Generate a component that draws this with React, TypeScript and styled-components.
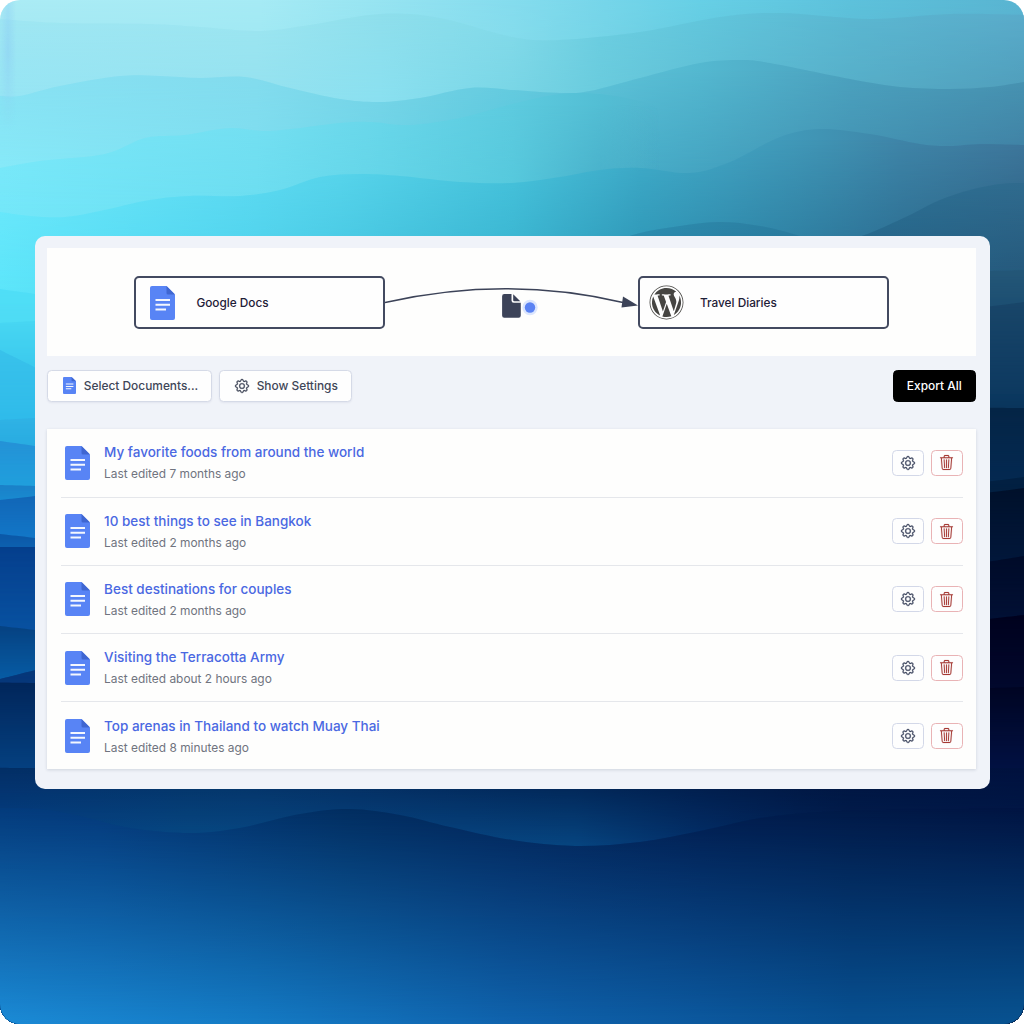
import React from "react";
import styled, { createGlobalStyle } from "styled-components";
import { BsGear, BsTrash3 } from "react-icons/bs";
import { FaWordpress } from "react-icons/fa";

const GlobalStyle = createGlobalStyle`
  *, *::before, *::after { box-sizing: border-box; }
  body { margin: 0; background: #fff; font-family: Inter, "Liberation Sans", sans-serif; }
`;

type Stop = [number, string];
type Point = [number, number];
interface WaveSpec {
  edge: Point[];
  top: Stop[];
  bottom: Stop[];
  y0: number;
  y1: number;
}

/* Smooth curve through the crest points, closed along the bottom of the canvas. */
const wavePath = (pts: Point[]) => {
  let d = `M${pts[0][0]} ${pts[0][1]}`;
  for (let i = 0; i < pts.length - 1; i++) {
    const a = pts[Math.max(i - 1, 0)];
    const b = pts[i];
    const c = pts[i + 1];
    const e = pts[Math.min(i + 2, pts.length - 1)];
    d += ` C${b[0] + (c[0] - a[0]) / 6} ${b[1] + (c[1] - a[1]) / 6} ${c[0] - (e[0] - b[0]) / 6} ${c[1] - (e[1] - b[1]) / 6} ${c[0]} ${c[1]}`;
  }
  return `${d} V1024 H${pts[0][0]} Z`;
};

const side = (x0: number, ya: number, x1: number, yb: number, top: string, bottom: string, y1: number): WaveSpec => ({
  edge: [[x0, ya], [x1, yb]],
  top: [[0, top]],
  bottom: [[0, bottom]],
  y0: Math.min(ya, yb),
  y1,
});

const left = (ya: number, yb: number, top: string, bottom: string, y1: number) => side(0, ya, 60, yb + (yb - ya) * 0.7, top, bottom, y1);
const right = (ya: number, yb: number, top: string, bottom: string, y1: number) => side(960, ya + (ya - yb) * 0.7, 1024, yb, top, bottom, y1);

const waves: WaveSpec[] = [
  {
    edge: [[0, 0], [1024, 0]], y0: 0, y1: 40,
    top: [[0, "#abecf5"], [260, "#a6ebf5"], [512, "#85dcee"], [700, "#67d0e6"], [850, "#5dc2dc"], [1024, "#59b5d2"]],
    bottom: [[0, "#a3e8f3"], [260, "#a0e8f3"], [512, "#84dcec"], [700, "#64cae0"], [850, "#5cbdd6"], [1024, "#5ab0cd"]],
  },
  {
    edge: [[0, 19], [60, 23], [150, 24], [200, 27], [260, 31], [310, 25], [380, 14], [440, 18], [512, 37], [560, 40], [640, 32], [720, 17], [780, 13], [870, 19], [950, 14], [1024, 15]],
    y0: 12, y1: 100,
    top: [[0, "#a0e7f3"], [256, "#9de6f1"], [380, "#8fdfec"], [512, "#84dbea"], [600, "#6ccee1"], [700, "#62c7dd"], [850, "#5bb8d2"], [1024, "#5aaccb"]],
    bottom: [[0, "#96e5f4"], [256, "#94e1ef"], [380, "#8ae0f0"], [512, "#78d5e5"], [600, "#69cbdd"], [750, "#5ab7cf"], [1024, "#4e9cb9"]],
  },
  {
    edge: [[0, 96], [20, 96], [60, 86], [120, 76], [160, 76], [200, 78], [245, 77], [290, 88], [340, 99], [380, 102], [420, 98], [470, 88], [512, 90], [560, 93], [590, 91], [640, 78], [700, 63], [740, 60], [770, 63], [850, 79], [900, 87], [950, 89], [990, 87], [1024, 82]],
    y0: 70, y1: 170,
    top: [[0, "#89e1f3"], [256, "#83dcee"], [380, "#77d4e7"], [512, "#67cce0"], [700, "#54b8d0"], [850, "#4ca2bf"], [1024, "#4895b3"]],
    bottom: [[0, "#86e9f8"], [256, "#7ddef0"], [380, "#6dd5e8"], [512, "#56c6dc"], [650, "#46abc7"], [800, "#4297b6"], [1024, "#3e7da1"]],
  },
  {
    edge: [[0, 168], [40, 161], [105, 154], [145, 138], [185, 135], [230, 128], [270, 131], [340, 123], [370, 122], [410, 125], [460, 118], [512, 104], [560, 94], [600, 94], [640, 101], [680, 112], [720, 126]],
    y0: 105, y1: 210,
    top: [[0, "#7de9f9"], [150, "#78e3f5"], [256, "#76e0f2"], [380, "#69d7ea"], [512, "#5dcbdf"], [600, "#53bed4"], [660, "#4eb4cc00"], [720, "#4eb4cc00"]],
    bottom: [[0, "#74e7f9"], [256, "#6bddf0"], [380, "#62d4e7"], [512, "#54c8dc"], [600, "#45acc7"], [660, "#429fbc00"], [720, "#429fbc00"]],
  },
  {
    edge: [[0, 212], [30, 216], [65, 217], [100, 211], [150, 200], [190, 196], [240, 196], [280, 190], [320, 177], [360, 174], [400, 176], [460, 182], [512, 183], [560, 177], [600, 170], [640, 168], [690, 173], [730, 162], [780, 137], [820, 129], [870, 134], [920, 144], [950, 146], [980, 144], [1024, 145]],
    y0: 140, y1: 290,
    top: [[0, "#72e9fb"], [200, "#65dff5"], [340, "#5cd8ee"], [512, "#4bc7df"], [640, "#41aecb"], [730, "#42a2c1"], [820, "#4094b4"], [900, "#3f85a8"], [1024, "#3e779c"]],
    bottom: [[0, "#5ce5fa"], [256, "#4bd0eb"], [512, "#34afcc"], [640, "#2990b1"], [750, "#277da0"], [860, "#266c91"], [1024, "#245676"]],
  },
  {
    edge: [[600, 246], [640, 233], [680, 226], [720, 222], [760, 226], [800, 236], [830, 246]], y0: 222, y1: 250,
    top: [[640, "#2d8eb0"], [800, "#2c7c9f"]], bottom: [[640, "#2988ab"], [800, "#27779b"]],
  },
  {
    edge: [[850, 240], [875, 231], [910, 215], [940, 200], [970, 190], [1000, 184], [1024, 183]], y0: 183, y1: 271,
    top: [[850, "#2c7397"], [1024, "#306b8e"]], bottom: [[850, "#246488"], [1024, "#265a7d"]],
  },
  left(289, 294, "#50dff7", "#4edbf4", 323),
  left(323, 321, "#48d7f3", "#3bc9ed", 367),
  left(350, 367.5, "#39c2eb", "#2fbbea", 420),
  left(420, 418, "#30b3e6", "#29ace1", 443),
  left(441, 446, "#2492d7", "#209fdc", 485),
  left(485, 486, "#1b80c8", "#198ad0", 500),
  left(500, 496, "#1265b6", "#1276c6", 535),
  left(534, 538, "#0c58a7", "#0c60af", 547),
  left(547, 547, "#053f8d", "#0851a0", 628),
  left(626, 630, "#064282", "#075da6", 682),
  left(679, 670, "#06377a", "#06377a", 683),
  left(682.5, 683, "#02265b", "#04407f", 767),
  right(271, 270, "#245778", "#1d4f72", 304),
  right(307, 302, "#194669", "#0d3960", 394),
  right(394, 394, "#0b3860", "#0a355c", 408),
  right(407.5, 408, "#052546", "#042951", 480),
  right(482, 477, "#022042", "#022042", 490),
  right(493, 488, "#01112b", "#01173a", 559),
  right(562, 556, "#010b29", "#011034", 617),
  right(619, 615, "#01021e", "#01082d", 688),
  right(688, 687, "#010523", "#011142", 767),
  {
    edge: [[0, 766], [35, 768], [512, 768], [960, 768], [1024, 768]], y0: 766, y1: 846,
    top: [[0, "#032e65"], [256, "#042f62"], [512, "#01204f"], [800, "#00153f"], [1024, "#01113e"]],
    bottom: [[0, "#05438a"], [190, "#074b86"], [350, "#084784"], [575, "#064580"], [700, "#03306a"], [850, "#011f51"], [1024, "#011b4b"]],
  },
  {
    edge: [[0, 808], [40, 809], [80, 816], [130, 828], [190, 833], [240, 828], [300, 814], [350, 809], [400, 815], [450, 827], [512, 840], [575, 846], [640, 842], [700, 831], [760, 818], [820, 812], [880, 810], [1024, 808]],
    y0: 808, y1: 1024,
    top: [[0, "#043b7c"], [100, "#04397a"], [190, "#033470"], [350, "#022d60"], [512, "#022458"], [700, "#011c4e"], [850, "#001947"], [1024, "#001442"]],
    bottom: [[0, "#1b8bd6"], [256, "#147bc5"], [512, "#0f63ad"], [700, "#0b599f"], [850, "#075192"], [1024, "#075391"]],
  },
];

const Stage = styled.div`
  position: relative;
  width: 1024px;
  height: 1024px;
  padding: 236px 34px 0 35px;
  border-radius: 20px;
  overflow: hidden;
`;

const Backdrop = styled.svg`
  position: absolute;
  inset: 0;
  width: 1024px;
  height: 1024px;
`;

const Panel = styled.main`
  position: relative;
  height: 553px;
  padding: 12px 14px 0 12px;
  border-radius: 10px;
  background: #f0f3f9;
`;

const Flow = styled.section`
  position: relative;
  display: flex;
  justify-content: space-between;
  height: 108px;
  padding: 27.5px 87px 0;
  background: #fefefd;
`;

const Node = styled.div<{ $gap: number; $pad: number }>`
  display: flex;
  align-items: center;
  gap: ${(p) => p.$gap}px;
  width: 251px;
  height: 53.5px;
  padding: 1px 0 0 ${(p) => p.$pad}px;
  border: 2px solid #434a60;
  border-radius: 5px;
  background: #fefefe;
  color: #1e2037;
  font-size: 11.8px;
  font-weight: 500;
`;

const Connector = styled.svg`
  position: absolute;
  left: 338px;
  top: 32px;
  width: 256px;
  height: 44px;
`;

const Toolbar = styled.div`
  display: flex;
  gap: 6.5px;
  margin-top: 13.5px;
`;

const Button = styled.button<{ $solid?: boolean; $width: number }>`
  display: flex;
  align-items: center;
  justify-content: center;
  gap: 8px;
  width: ${(p) => p.$width}px;
  height: 32.5px;
  margin-left: ${(p) => (p.$solid ? "auto" : "0")};
  padding: 0 0 0 ${(p) => (p.$solid ? 0 : 2)}px;
  border: 1px solid ${(p) => (p.$solid ? "#000" : "#d5dae7")};
  border-radius: 4.5px;
  background: ${(p) => (p.$solid ? "#000" : "#fefefe")};
  box-shadow: ${(p) => (p.$solid ? "none" : "0 1px 2px rgba(60, 70, 110, 0.08)")};
  color: ${(p) => (p.$solid ? "#fff" : "#3f4658")};
  font: 500 11.9px Inter, sans-serif;
  white-space: nowrap;
`;

const List = styled.ul`
  margin: 26.5px 0 0;
  padding: 0 13.5px;
  list-style: none;
  background: #fefefd;
  box-shadow: 0 1px 3px rgba(40, 50, 80, 0.16);
`;

const Row = styled.li`
  display: flex;
  align-items: center;
  height: 68.2px;
  padding-left: 4px;
  & + & { border-top: 1px solid #e5e7eb; }
`;

const Details = styled.div`
  flex: 1;
  padding: 0.6px 0 0 14.6px;
`;

const Title = styled.a`
  display: block;
  color: #4a68e2;
  font-size: 13.5px;
  font-weight: 500;
  line-height: 22px;
`;

const Edited = styled.div`
  color: #70747f;
  font-size: 11.9px;
  line-height: 21px;
`;

const IconButton = styled.button<{ $danger?: boolean }>`
  display: grid;
  place-items: center;
  width: 32px;
  height: 26px;
  margin-left: 7px;
  padding: 0;
  border: 1px solid ${(p) => (p.$danger ? "#e9b3b5" : "#d3d8e8")};
  border-radius: 4.5px;
  background: #fefefe;
  color: ${(p) => (p.$danger ? "#a53a36" : "#3f4760")};
`;

const Gear = styled(BsGear)`
  width: 14px;
  height: 14px;
  stroke: currentColor;
  stroke-width: 0.4;
  overflow: visible;
`;

const Trash = styled(BsTrash3)`
  width: 15px;
  height: 15px;
  stroke: currentColor;
  stroke-width: 0.15;
  overflow: visible;
`;

const DocIcon = ({ width, height }: { width: number; height: number }) => (
  <svg width={width} height={height} viewBox="0 0 50 68" preserveAspectRatio="none">
    <path fill="#5884f5" d="M4 0H33L50 17V64a4 4 0 0 1-4 4H4a4 4 0 0 1-4-4V4A4 4 0 0 1 4 0Z" />
    <path fill="#3f66d1" d="M33 0L50 17H36a3 3 0 0 1-3-3Z" />
    <path fill="#f4f7fe" d="M11 26H40V30H11ZM11 35.500H40V39.500H11ZM11 45H32V49H11Z" />
  </svg>
);

const Wave = ({ spec, id }: { spec: WaveSpec; id: string }) => {
  const d = wavePath(spec.edge);
  const stops = (list: Stop[]) => list.map(([x, color]) => <stop key={x} offset={x / 1024} stopColor={color} />);
  return (
    <g>
      <defs>
        <linearGradient id={`${id}t`} gradientUnits="userSpaceOnUse" x1="0" x2="1024" y1="0" y2="0">{stops(spec.top)}</linearGradient>
        <linearGradient id={`${id}b`} gradientUnits="userSpaceOnUse" x1="0" x2="1024" y1="0" y2="0">{stops(spec.bottom)}</linearGradient>
        <linearGradient id={`${id}f`} gradientUnits="userSpaceOnUse" x1="0" x2="0" y1={spec.y0} y2={spec.y1}>
          <stop offset="0" stopColor="#fff" stopOpacity="0" />
          <stop offset="1" stopColor="#fff" />
        </linearGradient>
        <mask id={`${id}m`} maskUnits="userSpaceOnUse" x="0" y="0" width="1024" height="1024" style={{ maskType: "alpha" }}>
          <rect width="1024" height="1024" fill={`url(#${id}f)`} />
        </mask>
      </defs>
      <path d={d} fill={`url(#${id}t)`} />
      <path d={d} fill={`url(#${id}b)`} mask={`url(#${id}m)`} />
    </g>
  );
};

const documents = [
  { title: "My favorite foods from around the world", edited: "Last edited 7 months ago" },
  { title: "10 best things to see in Bangkok", edited: "Last edited 2 months ago" },
  { title: "Best destinations for couples", edited: "Last edited 2 months ago" },
  { title: "Visiting the Terracotta Army", edited: "Last edited about 2 hours ago" },
  { title: "Top arenas in Thailand to watch Muay Thai", edited: "Last edited 8 minutes ago" },
];

export default function App() {
  return (
    <>
      <GlobalStyle />
      <Stage>
        <Backdrop viewBox="0 0 1024 1024">
          {waves.map((spec, i) => <Wave key={i} id={`w${i}`} spec={spec} />)}
          <defs>
            <linearGradient id="sheen"><stop offset="0" stopColor="#8ccdf5" stopOpacity="0" /><stop offset=".5" stopColor="#8ccdf5" stopOpacity=".5" /><stop offset="1" stopColor="#8ccdf5" stopOpacity="0" /></linearGradient>
            <linearGradient id="sheenFade" x2="0" y2="1"><stop offset="0" stopColor="#fff" stopOpacity=".7" /><stop offset=".4" stopColor="#fff" /><stop offset="1" stopColor="#fff" stopOpacity="0" /></linearGradient>
            <mask id="sheenMask" style={{ maskType: "alpha" }}><rect width="16" height="130" fill="url(#sheenFade)" /></mask>
          </defs>
          <rect width="16" height="130" fill="url(#sheen)" mask="url(#sheenMask)" />
        </Backdrop>
        <Panel>
          <Flow>
            <Node $gap={21.400} $pad={14}>
              <DocIcon width={25} height={34} />
              Google Docs
            </Node>
            <Connector viewBox="0 0 256 44">
              <path d="M0 22.500Q122 -5 238 22.500" fill="none" stroke="#3c4358" strokeWidth="1.6" />
              <path d="M238 16.500L253 25.500L236.500 27.500Z" fill="#3c4358" />
              <path d="M119.300 14h7.200v6.500a2.300 2.300 0 0 0 2.300 2.300h7v12.700a2.200 2.200 0 0 1-2.200 2.200H119.300a2.200 2.200 0 0 1-2.200-2.200v-19.300a2.200 2.200 0 0 1 2.200-2.200Z" fill="#3c4358" />
              <path d="M128.200 14.300L135.300 21.300h-6a1.100 1.100 0 0 1-1.100-1.100Z" fill="#3c4358" />
              <circle cx="145" cy="27.500" r="7.700" fill="#dce6fd" />
              <circle cx="145" cy="27.500" r="5.200" fill="#5b83f3" />
            </Connector>
            <Node $gap={16} $pad={9}>
              <FaWordpress size={35} color="#464542" />
              Travel Diaries
            </Node>
          </Flow>
          <Toolbar>
            <Button $width={165}><DocIcon width={13} height={17} />Select Documents...</Button>
            <Button $width={133.500}><Gear />Show Settings</Button>
            <Button $width={83.500} $solid>Export All</Button>
          </Toolbar>
          <List>
            {documents.map((doc) => (
              <Row key={doc.title}>
                <DocIcon width={25} height={34} />
                <Details>
                  <Title>{doc.title}</Title>
                  <Edited>{doc.edited}</Edited>
                </Details>
                <IconButton><Gear /></IconButton>
                <IconButton $danger><Trash /></IconButton>
              </Row>
            ))}
          </List>
        </Panel>
      </Stage>
    </>
  );
}
